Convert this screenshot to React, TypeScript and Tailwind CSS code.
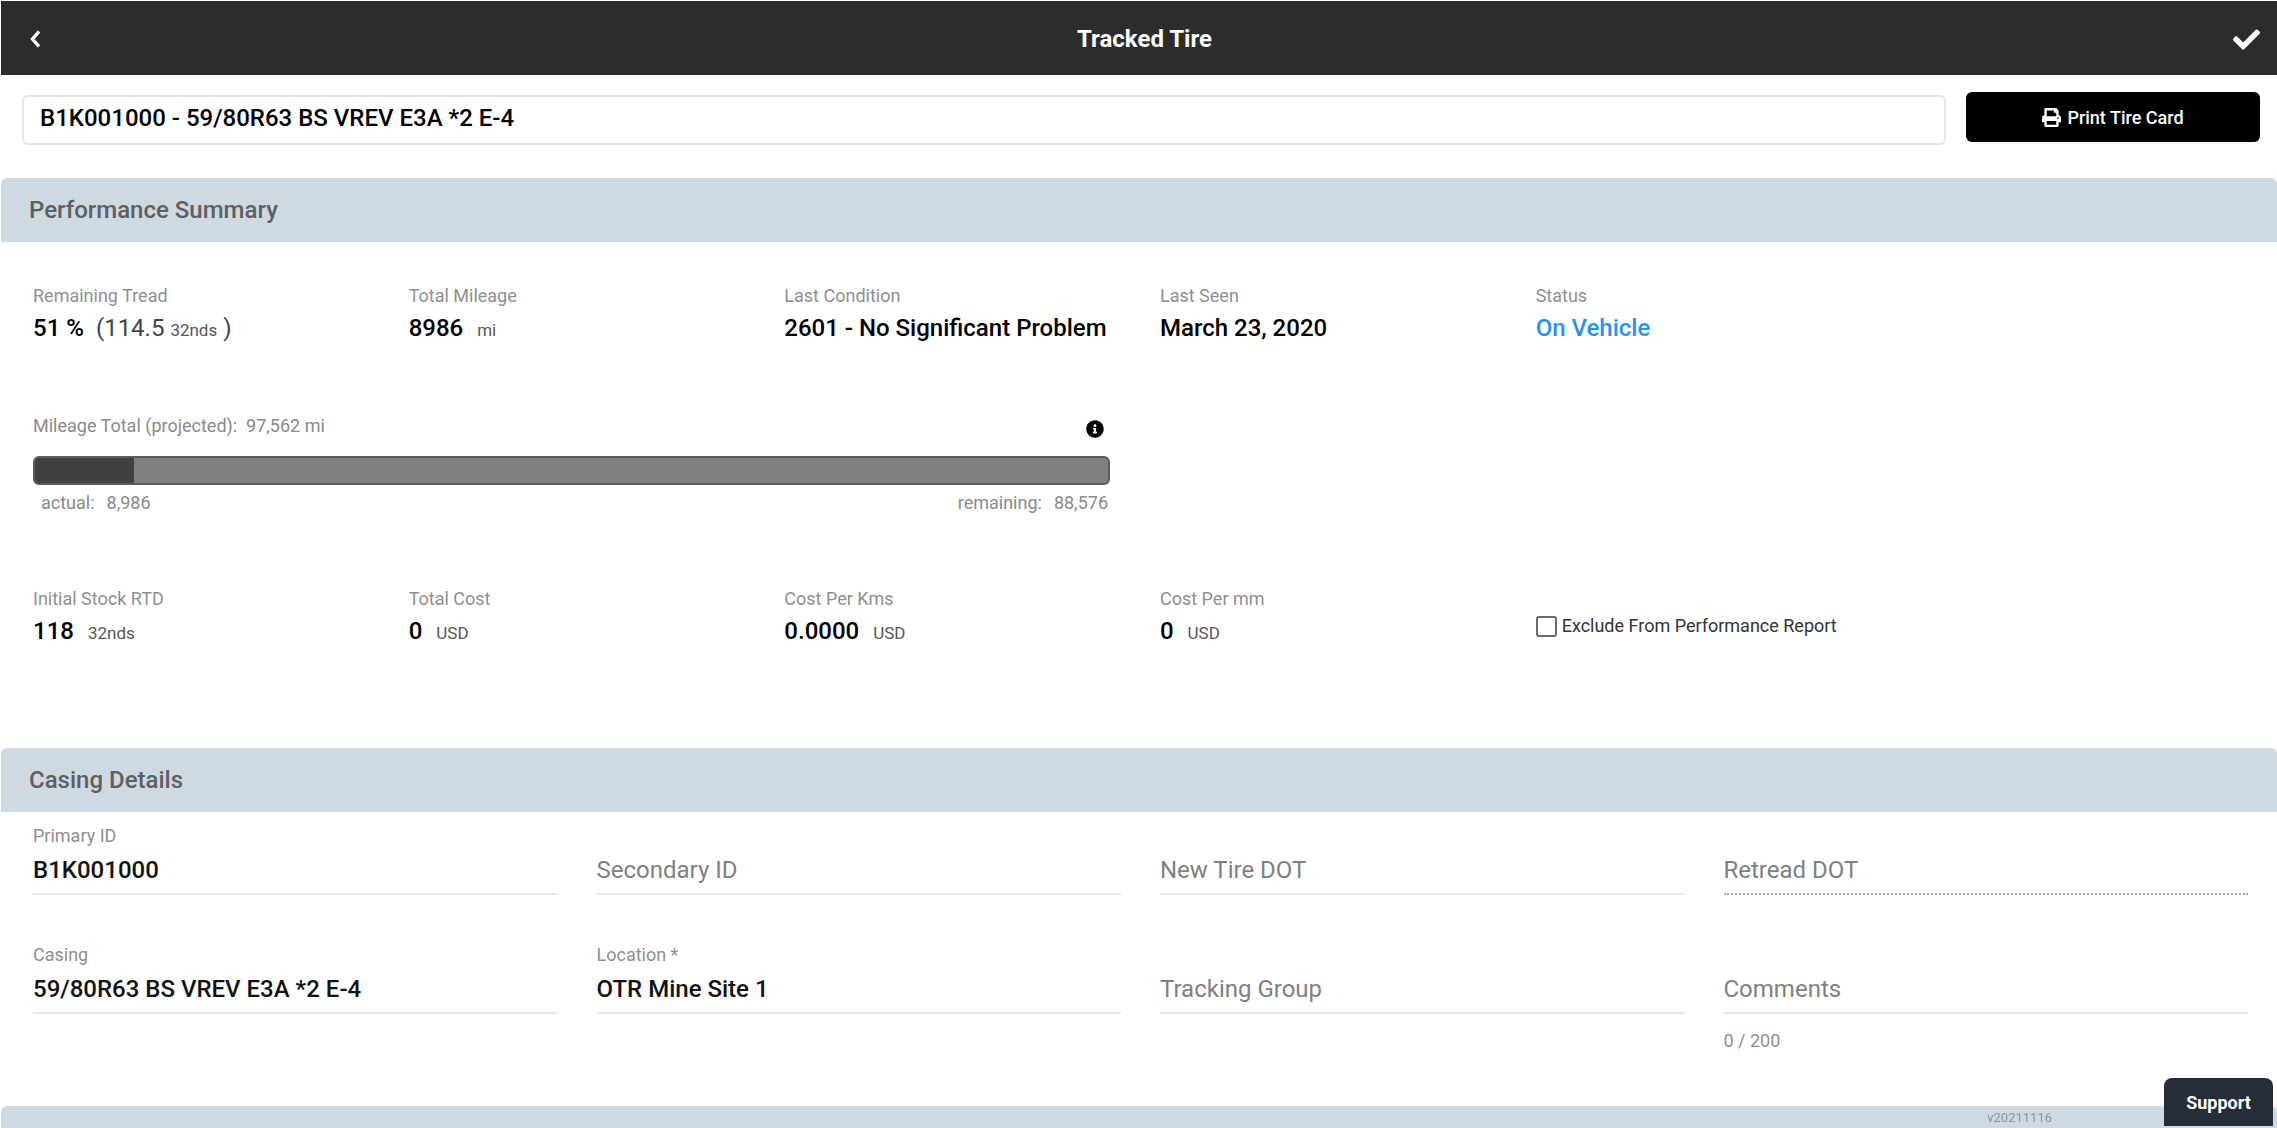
import type { ReactNode } from "react";
import { FaCheck, FaInfoCircle, FaPrint } from "react-icons/fa";

function SectionHeader({ children }: { children?: ReactNode }) {
  return (
    <h2 className="flex h-[64px] items-center rounded-t-md bg-[#cfd9e2] pl-7 text-[24px] leading-8 font-medium text-[#5c6064]">
      {children}
    </h2>
  );
}

function Stat({ label, children }: { label: string; children: ReactNode }) {
  return (
    <div className="whitespace-nowrap">
      <dt className="text-[18px] leading-6 text-[#8f8f8f]">{label}</dt>
      <dd className="mt-1 text-[24px] leading-8 font-medium text-black">{children}</dd>
    </div>
  );
}

function Unit({ children }: { children: ReactNode }) {
  return <span className="text-[17px] font-normal text-[#555]">{children}</span>;
}

type FieldProps = {
  id: string;
  label: string;
  value?: string;
  dotted?: boolean;
  hint?: string;
};

function Field({ id, label, value, dotted, hint }: FieldProps) {
  return (
    <div className="flex flex-col">
      {value ? (
        <label htmlFor={id} className="h-6 text-[18px] leading-6 text-[#8f8f8f]">
          {label}
        </label>
      ) : (
        <div className="h-6" />
      )}
      <input
        id={id}
        type="text"
        aria-label={label}
        defaultValue={value}
        placeholder={label}
        className={
          "mt-[3px] h-[44px] w-full border-b-2 bg-transparent pb-1 text-[24px] leading-8 font-medium text-[#111] outline-none placeholder:font-normal placeholder:text-[#808080] placeholder:opacity-100 " +
          (dotted ? "border-dotted border-[#a3a3a3]" : "border-[#e8e8e8]")
        }
      />
      {hint && <p className="mt-[15px] text-[18px] leading-6 text-[#8f8f8f]">{hint}</p>}
    </div>
  );
}

export default function App() {
  const actual = 8986;
  const projected = 97562;
  return (
    <div className="flex h-screen flex-col bg-white pt-px pl-px font-['Roboto',sans-serif]">
      <header className="flex h-[74px] shrink-0 items-center justify-between bg-[#2c2c2c] pt-[2px] pr-[17px] pl-7 text-white">
        <button type="button" aria-label="Back" className="flex w-8 items-center">
          <svg viewBox="0 0 12 18" className="h-[18px] w-3" fill="none" stroke="currentColor" strokeWidth="3.400">
            <path d="M10 1.500 3.500 9l6.500 7.500" />
          </svg>
        </button>
        <h1 className="text-[24px] leading-8 font-bold">Tracked Tire</h1>
        <button type="button" aria-label="Save" className="flex w-8 items-center justify-end">
          <FaCheck size={27} />
        </button>
      </header>

      <main className="min-h-0 flex-1 overflow-y-auto [scrollbar-width:none]">
        <div className="flex gap-5 pt-[17px] pr-[17px] pl-[21px]">
          <input
            type="text"
            aria-label="Tire"
            defaultValue="B1K001000 - 59/80R63 BS VREV E3A *2 E-4"
            className="mt-[3px] h-[50px] min-w-0 flex-1 rounded-md border-2 border-[#e6e6e6] px-4 pb-1 text-[24px] leading-8 font-medium text-black outline-none"
          />
          <button
            type="button"
            className="flex h-[50px] w-[294px] items-center justify-center gap-[6px] rounded-md bg-black text-[18px] font-medium text-white"
          >
            <FaPrint size={19} />
            Print Tire Card
          </button>
        </div>

        <section className="mt-[33px]">
          <SectionHeader>Performance Summary</SectionHeader>
          <dl className="grid grid-cols-6 gap-x-[39px] pt-[42px] pr-[29px] pl-8">
            <Stat label="Remaining Tread">
              51 %<span className="ml-3 font-normal text-[#444]">(114.5 <Unit>32nds</Unit> )</span>
            </Stat>
            <Stat label="Total Mileage">
              8986 <span className="ml-2"><Unit>mi</Unit></span>
            </Stat>
            <Stat label="Last Condition">2601 - No Significant Problem</Stat>
            <Stat label="Last Seen">March 23, 2020</Stat>
            <Stat label="Status">
              <a href="#vehicle" className="text-[#2592fa]">On Vehicle</a>
            </Stat>
          </dl>

          <div className="mt-[68px] grid grid-cols-2 gap-x-[39px] pr-[29px] pl-8 text-[18px] leading-6 text-[#8a8a8a]">
            <div className="pr-[11px]">
              <div className="flex h-6 items-end justify-between pr-[6px]">
                <span>Mileage Total (projected):&nbsp; 97,562 mi</span>
                <button type="button" aria-label="Mileage information" className="text-black">
                  <FaInfoCircle size={18} />
                </button>
              </div>
              <div className="mt-[18px] h-[29px] overflow-hidden rounded-md border-2 border-[#5c5c5c] bg-[#808080]">
                <div className="h-full bg-[#404040]" style={{ width: `${(actual / projected) * 100}%` }} />
              </div>
              <div className="mt-[6px] flex justify-between pr-[2px] pl-2">
                <span className="flex gap-3"><span>actual:</span><span>8,986</span></span>
                <span className="flex gap-3"><span>remaining:</span><span>88,576</span></span>
              </div>
            </div>
          </div>

          <dl className="mt-[72px] grid grid-cols-6 gap-x-[39px] pr-[29px] pl-8">
            <Stat label="Initial Stock RTD">
              118 <span className="ml-2"><Unit>32nds</Unit></span>
            </Stat>
            <Stat label="Total Cost">
              0 <span className="ml-2"><Unit>USD</Unit></span>
            </Stat>
            <Stat label="Cost Per Kms">
              0.0000 <span className="ml-2"><Unit>USD</Unit></span>
            </Stat>
            <Stat label="Cost Per mm">
              0 <span className="ml-2"><Unit>USD</Unit></span>
            </Stat>
            <label className="flex h-[78px] items-center gap-[5px] text-[18px] leading-6 whitespace-nowrap text-[#333]">
              <input
                type="checkbox"
                className="size-[21px] appearance-none rounded-[3px] border-2 border-[#6b6b6b] bg-white checked:bg-[#404040]"
              />
              Exclude From Performance Report
            </label>
          </dl>
        </section>

        <section className="mt-[83px]">
          <SectionHeader>Casing Details</SectionHeader>
          <div className="grid grid-cols-4 gap-x-[39px] gap-y-12 pt-3 pr-[29px] pl-8">
            <Field id="primary" label="Primary ID" value="B1K001000" />
            <Field id="secondary" label="Secondary ID" />
            <Field id="new-dot" label="New Tire DOT" />
            <Field id="retread-dot" label="Retread DOT" dotted />
            <Field id="casing" label="Casing" value="59/80R63 BS VREV E3A *2 E-4" />
            <Field id="location" label="Location *" value="OTR Mine Site 1" />
            <Field id="group" label="Tracking Group" />
            <Field id="comments" label="Comments" hint="0 / 200" />
          </div>
        </section>

        <section className="mt-[53px]">
          <SectionHeader />
        </section>
      </main>

      <span className="fixed right-[225px] bottom-[2px] text-[13px] leading-4 text-[#8f9499]">v20211116</span>
      <button
        type="button"
        className="fixed right-1 bottom-[2px] h-12 w-[109px] rounded-t-lg bg-[#272d38] text-[18px] font-bold text-white"
      >
        Support
      </button>
    </div>
  );
}
